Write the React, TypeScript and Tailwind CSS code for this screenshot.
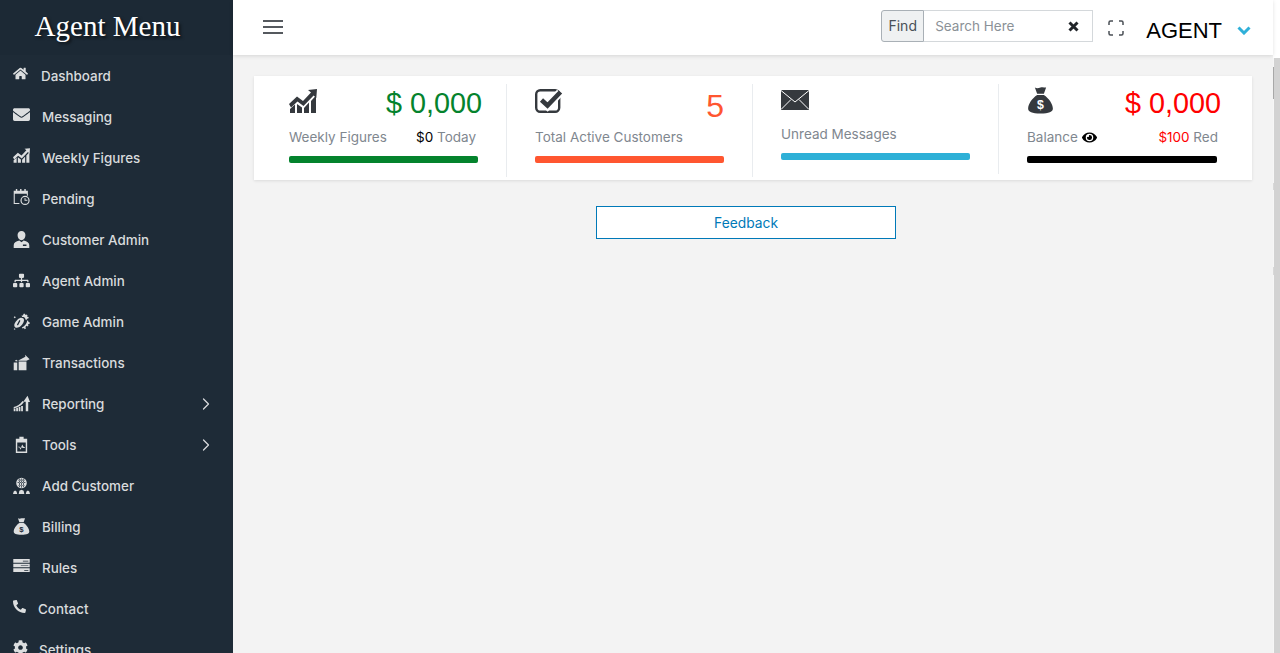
import React from "react";
import { ChevronRight } from "lucide-react";
import { FaHome, FaEnvelope, FaPhone, FaCog, FaEye, FaSitemap } from "react-icons/fa";

const I = ({ children, w = 17, h = 17, vb = "0 0 24 24" }: { children: React.ReactNode; w?: number; h?: number; vb?: string }) => (
  <svg width={w} height={h} viewBox={vb} fill="currentColor" className="shrink-0">{children}</svg>
);

const ChartUp = ({ w = 17, h = 15 }: { w?: number; h?: number }) => (
  <I w={w} h={h} vb="0 0 28 24">
    <path d="M0 15L8 7.500l6 4.500 8-8.500L19 1l9-1-.7 9-2.700-2.600L14.500 17l-6-4.500L2 18.500z" />
    <path d="M1 24v-4l5-4.500V24zM8 24v-9l5 3.500V24zM15 24v-5l5-5.500V24zM22 24V12l5-5.500V24z" />
  </I>
);
const CheckBox = () => (
  <svg width="28" height="24" viewBox="0 0 28 24" fill="none" className="shrink-0">
    <rect x="1.200" y="1.200" width="23" height="21.600" rx="4" stroke="#35393e" strokeWidth="2.400" />
    <path d="M6.500 11.500l6 5.500L25 3.500" stroke="#fff" strokeWidth="8" />
    <path d="M6.500 11l6 5.500L25.500 3" stroke="#35393e" strokeWidth="4.600" />
  </svg>
);
const Envelope = () => (
  <svg width="28" height="20" viewBox="0 0 28 20" className="shrink-0">
    <rect width="28" height="20" fill="#35393e" />
    <path d="M0 .5l14 11.500L28 .5M0 19.500l10-10M28 19.500l-10-10" stroke="#fff" strokeWidth="1" fill="none" />
  </svg>
);
const Cal = () => (
  <I>
    <path d="M1 4h3V1.500h2V4h4V1.500h2V4h4V1.500h2V4h3v7h-1.500V8H2.500v13H9v1.500H1z" />
    <path fillRule="evenodd" d="M17 11a6.500 6.500 0 1 0 0 13 6.500 6.500 0 0 0 0-13zm0 1.700a4.800 4.800 0 1 1 0 9.600 4.800 4.800 0 0 1 0-9.600zM16.300 14v4h4v-1.300h-2.700V14z" />
  </I>
);
const Gear = () => (
  <I>
    <path fillRule="evenodd" d="M10 7c3-.5 5 .5 5.500 2.500S14 16 11 18.500c-2.500 2-6 3-8 1.500S1.500 15 4 12s4-4.500 6-5zm-1 3L5.500 16.500l1.500 1L10.500 11z" />
    <path d="M15 1l2 0 .5 1.800 1.800-.8 1.300 1.400-1 1.600 2.400.5v2l-2 .5-.5 1.500-2-.5-.5-2-2-1.500-2 .3L12 3.500l2 0zM19.500 10.500l2 .5.300 1.800 2 .7-.5 2-2 .2.500 2-1.500 1.300-1.600-1-1.200 2 1 1.500-2 1.300-1-1.500-2 .7-1-1.700 3-1.500 2.800-3.300 1.500-3z" />
    <path d="M1 6l1.500-1.500L4 6 2.500 7.500zM1 22.500l1.500-1 1 1.500-1.500.5z" />
  </I>
);
const Trans = () => (
  <I>
    <path d="M8 10.500h11V23H8zM1 12h5v11H1zM2.500 10l2-2 2 1.500L6 10.500zM7.500 9l10-5L17 1l6.500 6.500L19 9.500H8z" />
  </I>
);
const Report = () => (
  <I>
    <path d="M1 23v-4h2.500v4zM4.500 23v-5H7v5zM8 23v-6h2.500v6zM11.500 23v-7.500H14V23zM18 23V9.500h-3.500L20.500 1 24 10h-2.500v13z" />
    <path d="M1 17c5-1 9-4 12.500-8.500L15.500 10c-3.500 5-8.500 8-14.500 9z" />
  </I>
);
const Clip = () => (
  <I>
    <path fillRule="evenodd" d="M4 4h5V1h6v3h5v20H4zm2 5v13h12V9zm1 6h2.500l1.500 2 2-5 2.500 4H17v1h-3.500l-1-1.500-2 4-1.500-3.500H7z" />
  </I>
);
const Group = () => (
  <I>
    <path fillRule="evenodd" d="M12 1a7.500 7.500 0 1 0 0 15 7.500 7.500 0 0 0 0-15zM6.500 7.500h11v1h-11zM7.500 4h9v1h-9zM7.500 11.500h9v1h-9zM11.500 2h1v13h-1zM8.500 2.500h1v12h-1zM14.500 2.500h1v12h-1z" />
    <path d="M0 24l1-3.500 2-1.500 2 1.500 1 3.500zM8 24l1-4.500 3-1.500 3 1.500 1 4.500zM18 24l1-3.500 2-1.500 2 1.500 1 3.500z" />
  </I>
);
const Bag = ({ w = 17, h = 17, dollar }: { w?: number; h?: number; dollar: string }) => (
  <I w={w} h={h} vb="0 0 24 24">
    <path d="M7 .5c1.700 1 3.300.5 5 0s3.300 0 5 0L15 6H9zM9 7h6c4.500 3 8 8 8 12 0 3-3.500 4.500-11 4.500S1 22 1 19C1 15 4.500 10 9 7z" />
    <text x="12" y="19.500" textAnchor="middle" fontSize="11" fontWeight="700" fill={dollar} fontFamily="Liberation Sans, sans-serif">$</text>
  </I>
);
const Rules = () => (
  <I h={13} vb="0 0 24 19">
    <path fillRule="evenodd" d="M0 0h24v5.500H0zm14 2.500v1h8v-1zM0 7h24v5H0zm11 2v1h11V9zM0 13.500h24V19H0zm16 2.500v1h6v-1z" />
  </I>
);
const Customer = () => (
  <I>
    <path d="M12 0a5.500 5.500 0 0 1 5.500 6c0 3.500-2.500 7-5.500 7S6.500 9.500 6.500 6A5.500 5.500 0 0 1 12 0zM1 24v-4c0-3.500 3-5.500 8-6.500l3 2.500 3-2.500c5 1 8 3 8 6.500v4zm13-5v2h5v-2z" />
  </I>
);

type Item = { label: string; icon: React.ReactNode; up?: boolean; chev?: boolean; ml: string };
const items: Item[] = [
  { label: "Dashboard", icon: <FaHome size={15} />, up: true, ml: "ml-[11px]" },
  { label: "Messaging", icon: <FaEnvelope size={17} />, up: true, ml: "ml-[12px]" },
  { label: "Weekly Figures", icon: <ChartUp />, up: true, ml: "ml-[12px]" },
  { label: "Pending", icon: <Cal />, up: true, ml: "ml-[12px]" },
  { label: "Customer Admin", icon: <Customer />, ml: "ml-[12px]" },
  { label: "Agent Admin", icon: <FaSitemap size={17} />, ml: "ml-[12px]" },
  { label: "Game Admin", icon: <Gear />, ml: "ml-[12px]" },
  { label: "Transactions", icon: <Trans />, ml: "ml-[12px]" },
  { label: "Reporting", icon: <Report />, chev: true, ml: "ml-[12px]" },
  { label: "Tools", icon: <Clip />, chev: true, ml: "ml-[12px]" },
  { label: "Add Customer", icon: <Group />, ml: "ml-[12px]" },
  { label: "Billing", icon: <Bag dollar="#1e2b37" />, ml: "ml-[12px]" },
  { label: "Rules", icon: <Rules />, up: true, ml: "ml-[12px]" },
  { label: "Contact", icon: <FaPhone size={13} className="-scale-x-100" />, up: true, ml: "ml-[8px]" },
  { label: "Settings", icon: <FaCog size={15} />, up: true, ml: "ml-[9px]" },
];

function Stat({ icon, value, label, right, bar, cls, rowCls }: { icon: React.ReactNode; value?: React.ReactNode; label: React.ReactNode; right?: React.ReactNode; bar: string; cls: string; rowCls: string }) {
  return (
    <div className={`shrink-0 flex flex-col pb-[14px] ${cls}`}>
      <div className={`flex justify-between items-start ${rowCls}`}>
        {icon}
        {value}
      </div>
      <div className="flex justify-between text-[13.5px] leading-[20px] text-[#7f878f]">
        <div className="flex items-center gap-[4px]">{label}</div>
        {right}
      </div>
      <div className={`h-[7px] rounded-[2px] mt-[9px] ${bar}`} />
    </div>
  );
}

export default function App() {
  return (
    <div className="h-[653px] w-[1280px] overflow-hidden flex bg-white font-['Inter',sans-serif]">
      <aside className="w-[233px] shrink-0 bg-[#1e2b37] flex flex-col overflow-hidden">
        <div className="h-[55px] shrink-0 bg-[#1c2935] flex items-center justify-center pr-[18px] pb-[2px] text-white text-[29px] font-['Liberation_Serif',serif] [text-shadow:2px_2px_3px_rgba(0,0,0,0.6)]">
          Agent Menu
        </div>
        <nav className="flex flex-col">
          {items.map((it) => (
            <div key={it.label} className="h-[41px] shrink-0 flex items-center pl-[13px] pr-[17px] text-[13.4px] font-medium text-[#d9dbdd]">
              <span className={`w-[17px] flex justify-start text-[#dcdedf] ${it.up ? "-mt-[5px]" : ""}`}>{it.icon}</span>
              <span className={`${it.ml} mt-[2px]`}>{it.label}</span>
              {it.chev && <ChevronRight size={20} strokeWidth={1.5} className="ml-auto" />}
            </div>
          ))}
        </nav>
      </aside>

      <div className="w-[1040px] shrink-0 flex flex-col bg-[#f3f3f3]">
        <header className="h-[55px] shrink-0 bg-white shadow-[0_1px_4px_rgba(0,0,0,0.12)] flex items-center pl-[30px] pr-[22px] pb-[2px]">
          <div className="flex flex-col gap-[4px] w-[20px]">
            <span className="h-[2px] bg-[#55595e]" />
            <span className="h-[2px] bg-[#55595e]" />
            <span className="h-[2px] bg-[#55595e]" />
          </div>
          <div className="ml-auto flex items-center">
            <div className="mb-[2px] h-[32px] w-[43px] flex items-center justify-center bg-[#eff1f2] border border-[#a9b0b6] rounded-l-[3px] text-[14px] text-[#495057]">Find</div>
            <div className="mb-[2px] h-[32px] w-[169px] border border-l-0 border-[#d4d8db] flex items-center pl-[11px] pr-[13px] pt-[1px] text-[13.5px] text-[#8b9197]">
              Search Here
              <svg width="11" height="11" viewBox="0 0 11 11" className="ml-auto" fill="none" stroke="#212529" strokeWidth="3">
                <path d="M1.500 1.500l8 8M9.500 1.500l-8 8" />
              </svg>
            </div>
            <svg width="16" height="16" viewBox="0 0 16 16" fill="none" stroke="#4a4f55" strokeWidth="1.500" className="ml-[15px] mt-[2px]">
              <path d="M1 5V2.500A1.500 1.500 0 0 1 2.500 1H5M11 1h2.500A1.500 1.500 0 0 1 15 2.500V5M15 11v2.500a1.500 1.500 0 0 1-1.500 1.500H11M5 15H2.500A1.500 1.500 0 0 1 1 13.500V11" />
            </svg>
            <span className="ml-[22px] mt-[8px] text-[22px] text-black font-['Liberation_Sans',sans-serif]">AGENT</span>
            <svg width="14" height="9" viewBox="0 0 14 9" fill="none" stroke="#2fb0d9" strokeWidth="3" className="ml-[15px] mt-[7px]">
              <path d="M1.500 1.500L7 7l5.500-5.500" />
            </svg>
          </div>
        </header>

        <main className="flex-1 pl-[21px] pr-[21px] pt-[21px]">
          <div className="h-[104px] bg-white shadow-[0_1px_3px_rgba(0,0,0,0.1)] flex items-start pt-[8px]">
            <Stat
              cls="w-[253px] pl-[35px] pr-[28px] border-r border-[#e9ecef]"
              rowCls="h-[43px]"
              icon={<span className="mt-[5px] text-[#35393e]"><ChartUp w={28} h={24} /></span>}
              value={<div className="-mr-[4px] text-[#04832d] text-[28.8px] leading-[38px] font-['Liberation_Sans',sans-serif]">$ 0,000</div>}
              label="Weekly Figures"
              right={<span className="mr-[2px]"><span className="text-black">$0</span> Today</span>}
              bar="bg-[#04832d]"
            />
            <Stat
              cls="w-[246px] pl-[28px] pr-[28px] border-r border-[#e9ecef]"
              rowCls="h-[43px]"
              icon={<span className="mt-[5px]"><CheckBox /></span>}
              value={<div className="mt-[3px] text-[#ff5630] text-[32px] leading-[38px] font-['Liberation_Sans',sans-serif]">5</div>}
              label="Total Active Customers"
              bar="bg-[#ff5630]"
            />
            <Stat
              cls="w-[246px] pl-[28px] pr-[28px] border-r border-[#e9ecef]"
              rowCls="h-[40px]"
              icon={<span className="mt-[6px]"><Envelope /></span>}
              label="Unread Messages"
              bar="bg-[#2eb0d7]"
            />
            <Stat
              cls="w-[253px] pl-[28px] pr-[35px]"
              rowCls="h-[43px]"
              icon={<span className="mt-[3px] text-[#35393e]"><Bag w={27} h={27} dollar="#fff" /></span>}
              value={<div className="-mr-[4px] text-[#ff0000] text-[28.8px] leading-[38px] font-['Liberation_Sans',sans-serif]">$ 0,000</div>}
              label={<>Balance <FaEye size={15} className="text-black" /></>}
              right={<span className="-mr-[1px]"><span className="text-[#ff0000]">$100</span> Red</span>}
              bar="bg-black"
            />
          </div>
          <div className="flex justify-center mt-[26px] pr-[14px]">
            <div className="w-[300px] h-[33px] border border-[#0079b8] bg-white flex items-center justify-center pt-[2px] text-[13.8px] text-[#0079b8]">Feedback</div>
          </div>
        </main>
      </div>

      <div className="w-[7px] shrink-0 pt-[58px] flex">
        <div className="relative flex-1 bg-[#d2d2d2] border-l border-[#f6f6f6]">
          <div className="absolute -left-px top-[9px] h-[32px] w-px bg-[#a8a8a8]" />
          <div className="absolute -left-px top-[125px] h-[7px] w-px bg-[#d8d8d8]" />
          <div className="absolute -left-px top-[209px] h-[8px] w-px bg-[#d8d8d8]" />
        </div>
      </div>
    </div>
  );
}
